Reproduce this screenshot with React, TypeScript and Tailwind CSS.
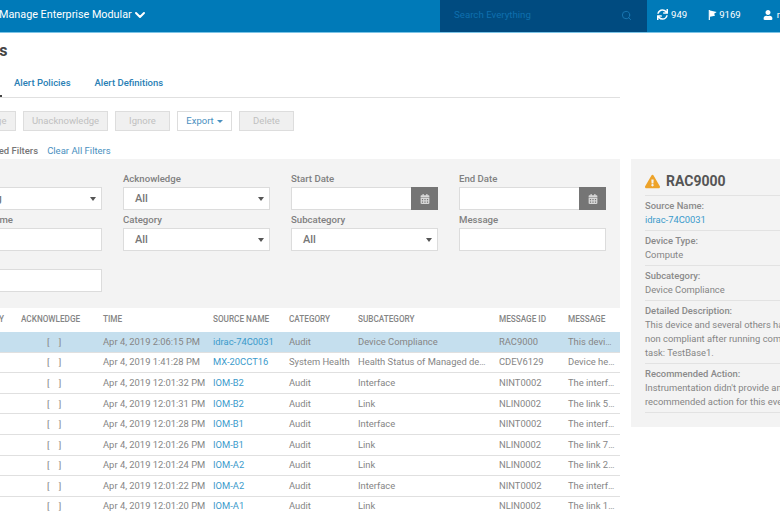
import { ChevronDown, Search } from "lucide-react";
import { FaCalendarAlt, FaExclamationTriangle, FaSync, FaUser } from "react-icons/fa";

const rows = [
  ["Apr 4, 2019 2:06:15 PM", "idrac-74C0031", "Audit", "Device Compliance", "RAC9000", "This devi…"],
  ["Apr 4, 2019 1:41:28 PM", "MX-20CCT16", "System Health", "Health Status of Managed de…", "CDEV6129", "Device he…"],
  ["Apr 4, 2019 12:01:32 PM", "IOM-B2", "Audit", "Interface", "NINT0002", "The interf…"],
  ["Apr 4, 2019 12:01:31 PM", "IOM-B2", "Audit", "Link", "NLIN0002", "The link 5…"],
  ["Apr 4, 2019 12:01:28 PM", "IOM-B1", "Audit", "Interface", "NINT0002", "The interf…"],
  ["Apr 4, 2019 12:01:26 PM", "IOM-B1", "Audit", "Link", "NLIN0002", "The link 7…"],
  ["Apr 4, 2019 12:01:24 PM", "IOM-A2", "Audit", "Link", "NLIN0002", "The link 2…"],
  ["Apr 4, 2019 12:01:22 PM", "IOM-A2", "Audit", "Interface", "NINT0002", "The interf…"],
  ["Apr 4, 2019 12:01:20 PM", "IOM-A1", "Audit", "Link", "NLIN0002", "The link 1…"],
];

const columns = "grid grid-cols-[81px_82px_110px_76px_69px_141px_69px_52px] items-center";

const Field = ({ label, children }: { label: string; children?: React.ReactNode }) => (
  <div>
    <div className="flex h-[18px] items-center pt-[2px] text-[9.6px] font-medium text-[#808080]">{label}</div>
    {children ?? <div className="h-[23px] border border-[#dcdcdc] bg-white" />}
  </div>
);

const SelectBox = ({ value, tight }: { value: string; tight?: boolean }) => (
  <div
    className={`flex h-[23px] items-center justify-between border border-[#dcdcdc] bg-white pr-[5px] pt-px text-[11px] font-medium text-[#777] ${
      tight ? "pl-[5px]" : "pl-[11px]"
    }`}
  >
    {value}
    <span className="h-0 w-0 border-x-[3px] border-t-[4px] border-x-transparent border-t-[#555]" />
  </div>
);

const DateBox = () => (
  <div className="flex h-[23px] border border-[#dcdcdc] bg-white">
    <div className="flex-1" />
    <div className="-my-px -mr-px flex w-[27px] items-center justify-center bg-[#757575] text-[#d8d8d8]">
      <FaCalendarAlt size={10} />
    </div>
  </div>
);

const Detail = ({ title, lines, link }: { title: string; lines: string[]; link?: boolean }) => (
  <div className="border-b border-[#e2e2e2] py-[3px] text-[9.4px] leading-[14px]">
    <div className="font-medium text-[#8a8a8a]">{title}</div>
    {lines.map((line) => (
      <div key={line} className={`whitespace-nowrap ${link ? "text-[#3a9acb]" : "text-[#858585]"}`}>
        {line}
      </div>
    ))}
  </div>
);

export default function App() {
  return (
    <div className="h-[516px] w-[780px] overflow-hidden bg-white font-['Roboto',sans-serif]">
      <header className="flex h-[33px] items-center border-b border-[#7cc4e6] bg-[#007ab8] text-white">
        <div className="flex w-[440px] shrink-0 items-center pb-[2px] text-[10.8px]">
          <span className="-ml-px">Manage Enterprise Modular</span>
          <ChevronDown size={16} strokeWidth={3} />
        </div>
        <div className="flex h-full w-[207px] shrink-0 items-center justify-between bg-[#004b80] pb-[2px] pl-[14px] pr-[15px] text-[9.7px] text-[#0f6fae]">
          <span>Search Everything</span>
          <Search size={11} className="text-[#1a78b4]" />
        </div>
        <div className="flex w-[133px] shrink-0 items-center overflow-hidden whitespace-nowrap pb-[2px] pl-[10px] text-[9.6px]">
          <FaSync size={11} className="shrink-0" />
          <span className="ml-[3px]">949</span>
          <svg viewBox="0 0 10 12" className="ml-[21px] h-[10px] w-[9px] shrink-0" fill="currentColor">
            <path d="M0.5 0h1.4v12H0.5z M2 0.5 L10 2.5 L7 4.5 L8 7 L2 8z" />
          </svg>
          <span className="ml-[2px]">9169</span>
          <FaUser size={10} className="ml-[22px] shrink-0" />
          <span className="ml-[4px]">root</span>
        </div>
      </header>

      <div className="ml-[-60px] flex w-[960px] gap-[11px]">
        <main className="w-[680px] shrink-0">
          <h1 className="flex h-[32px] items-center pl-[24px] pt-[4px] text-[16px] font-bold text-[#444]">Alerts</h1>
          <nav className="flex h-[33px] items-center border-b border-[#e0e0e0] pl-[11px] text-[9.5px] font-medium text-[#2a7fb5]">
            <a className="flex h-full w-[51px] items-center border-b-2 border-[#444] pl-[12px] pt-[4px] text-[#444]">Alerts</a>
            <a className="px-[12px] pt-[4px]">Alert Policies</a>
            <a className="px-[12px] pt-[4px]">Alert Definitions</a>
          </nav>
          <div className="flex items-center gap-[7px] pt-[13px] text-[9.5px]">
            {["Acknowledge", "Unacknowledge", "Ignore"].map((label, i) => (
              <span
                key={label}
                className={`flex h-[20px] items-center justify-center border border-[#ddd] bg-[#f0f0f0] text-[#c0c0c0] ${
                  i === 0 ? "w-[76px]" : i === 1 ? "w-[85px]" : "w-[55px]"
                }`}
              >
                {label}
              </span>
            ))}
            <span className="flex h-[20px] w-[55px] items-center justify-center gap-[3px] border border-[#ddd] bg-white text-[#4a90c0]">
              Export
              <span className="h-0 w-0 border-x-[3px] border-t-[3px] border-x-transparent border-t-[#4a90c0]" />
            </span>
            <span className="flex h-[20px] w-[55px] items-center justify-center border border-[#ddd] bg-[#f0f0f0] text-[#c0c0c0]">
              Delete
            </span>
          </div>
          <div className="flex h-[28px] items-center gap-[9px] pl-[37px] pt-[12px] text-[9.5px]">
            <span className="font-medium text-[#777]">Applied Filters</span>
            <a className="text-[#4a90c0]">Clear All Filters</a>
          </div>
          <section className="grid h-[149px] grid-cols-[147px_147px_147px_147px] content-start gap-x-[21px] bg-[#f3f3f3] pl-[15px] pt-[10px]">
            <Field label="Severity"><SelectBox value="Warning" tight /></Field>
            <Field label="Acknowledge"><SelectBox value="All" /></Field>
            <Field label="Start Date"><DateBox /></Field>
            <Field label="End Date"><DateBox /></Field>
            <Field label="Source Name" />
            <Field label="Category"><SelectBox value="All" /></Field>
            <Field label="Subcategory"><SelectBox value="All" /></Field>
            <Field label="Message" />
            <Field label="" />
          </section>
          <div className={`${columns} mt-px h-[23px] pb-[2px] text-[8.2px] font-medium text-[#858585]`}>
            <span className="pr-[17px] text-right">SEVERITY</span>
            <span>ACKNOWLEDGE</span>
            <span>TIME</span>
            <span>SOURCE NAME</span>
            <span>CATEGORY</span>
            <span>SUBCATEGORY</span>
            <span>MESSAGE ID</span>
            <span>MESSAGE</span>
          </div>
          {rows.map((row, i) => (
            <div
              key={row[0]}
              className={`${columns} h-[20.6px] whitespace-nowrap border-b border-[#e0e0e0] text-[9.4px] text-[#858585] ${
                i === 0 ? "bg-[#c5dfee]" : ""
              }`}
            >
              <span />
              <span className="pl-[26px]">[&nbsp;&nbsp;&nbsp;&nbsp;]</span>
              <span>{row[0]}</span>
              <a className="text-[#3a9acb]">{row[1]}</a>
              <span>{row[2]}</span>
              <span>{row[3]}</span>
              <span>{row[4]}</span>
              <span>{row[5]}</span>
            </div>
          ))}
        </main>

        <aside className="mt-[126px] h-[268px] w-[260px] shrink-0 bg-[#f3f3f3] pl-[14px]">
          <div className="flex h-[37px] items-center gap-[6px] border-b border-[#e2e2e2] pt-[8px] text-[14px] font-bold text-[#555]">
            <FaExclamationTriangle size={15} className="text-[#eda32a]" />
            RAC9000
          </div>
          <Detail title="Source Name:" lines={["idrac-74C0031"]} link />
          <Detail title="Device Type:" lines={["Compute"]} />
          <Detail title="Subcategory:" lines={["Device Compliance"]} />
          <Detail
            title="Detailed Description:"
            lines={[
              "This device and several others have been found",
              "non compliant after running compliance check",
              "task: TestBase1.",
            ]}
          />
          <Detail
            title="Recommended Action:"
            lines={["Instrumentation didn't provide any", "recommended action for this event."]}
          />
        </aside>
      </div>
    </div>
  );
}
